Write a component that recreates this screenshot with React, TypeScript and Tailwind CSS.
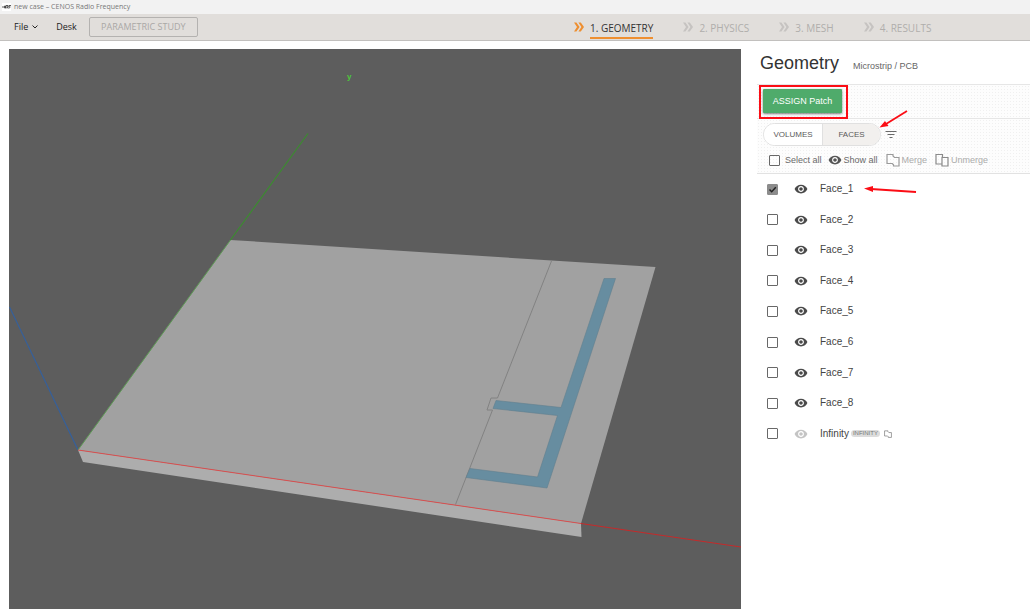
import { useState } from "react";
import type { ReactNode } from "react";

const STEPS = ["1. GEOMETRY", "2. PHYSICS", "3. MESH", "4. RESULTS"];

const FACES = ["Face_1", "Face_2", "Face_3", "Face_4", "Face_5", "Face_6", "Face_7", "Face_8"];

// Dotted texture behind the two toolbars of the side panel.
const TEXTURE = "bg-[#fdfdfd] bg-[radial-gradient(#f0f0f0_1px,transparent_1px)] bg-[size:3px_3px]";

function EyeIcon({ className }: { className: string }) {
  return (
    <svg className={className} viewBox="0 0 24 24" fill="currentColor" aria-hidden="true">
      <path d="M12 4.5C7 4.5 2.73 7.61 1 12c1.73 4.39 6 7.5 11 7.5s9.27-3.11 11-7.5c-1.73-4.39-6-7.5-11-7.5zM12 17c-2.76 0-5-2.24-5-5s2.24-5 5-5 5 2.24 5 5-2.24 5-5 5zm0-8c-1.66 0-3 1.34-3 3s1.34 3 3 3 3-1.34 3-3-1.34-3-3-3z" />
    </svg>
  );
}

function MergeIcon({ className }: { className: string }) {
  return (
    <svg className={className} viewBox="0 0 14 14" fill="none" stroke="currentColor" aria-hidden="true">
      <path d="M1 1.500h6v1.500l1.500 1.500H13V13H7.500v-1.200L6.300 10.500H1z" strokeWidth="1.200" />
    </svg>
  );
}

function UnmergeIcon({ className }: { className: string }) {
  return (
    <svg className={className} viewBox="0 0 14 14" fill="none" stroke="currentColor" aria-hidden="true">
      <path d="M7 11H1V1.500h6.500v3M7 4.500h6V13H7z" strokeWidth="1.200" />
    </svg>
  );
}

function ChevronsIcon({ className }: { className: string }) {
  return (
    <svg className={className} viewBox="0 0 10 10" fill="currentColor" aria-hidden="true">
      <path d="M0 .5h2.400L5.600 5 2.400 9.500H0L3 5zM4.400 .5h2.400L10 5 6.800 9.500H4.400L7.400 5z" />
    </svg>
  );
}

function Checkbox({ label, checked, onChange }: { label: string; checked: boolean; onChange: () => void }) {
  return (
    <span className="relative flex size-[11px] shrink-0">
      <input
        type="checkbox"
        aria-label={label}
        checked={checked}
        onChange={onChange}
        className="size-[11px] appearance-none rounded-[1px] border border-[#686868] checked:border-[#8c8c8c] checked:bg-[#8c8c8c]"
      />
      {checked && (
        <svg className="pointer-events-none absolute inset-0 size-[11px]" viewBox="0 0 11 11" fill="none" stroke="#222" strokeWidth="1.5">
          <path d="M2.500 5.500l2.200 2.200L8.800 3.300" />
        </svg>
      )}
    </span>
  );
}

function FaceRow({
  name,
  checked,
  onToggle,
  dim,
  children,
}: {
  name: string;
  checked: boolean;
  onToggle: () => void;
  dim?: boolean;
  children?: ReactNode;
}) {
  return (
    <li className="flex items-center pl-2.5">
      <Checkbox label={name} checked={checked} onChange={onToggle} />
      <button type="button" aria-label={`Toggle ${name}`} className={dim ? "ml-4 text-[#c4c4c4]" : "ml-4 text-[#4a4a4a]"}>
        <EyeIcon className="size-[14px]" />
      </button>
      <span className="ml-3 text-[10px] leading-3 text-[#444]">{name}</span>
      {children}
    </li>
  );
}

function Viewport() {
  return (
    <svg
      className="min-w-0 flex-1 self-stretch bg-[#5d5d5d]"
      viewBox="9 49 732 560"
      preserveAspectRatio="xMinYMin slice"
      role="img"
      aria-label="3D model"
    >
      {/* Board */}
      <path d="M78 450L581 523.500L581.500 537L83 462z" fill="#adadad" />
      <path d="M230.500 240L655.500 267L581 523.500L78 450z" fill="#a1a1a1" />

      {/* Face edges */}
      <path d="M551.500 261L497.500 398H491L487 410H492.500L455.500 504.500" fill="none" stroke="#828282" strokeWidth="1" />
      <path
        d="M604 278.500H615.500L547 488L466 477.500L470 468.500L537.500 477L557.500 415.500L493 408.500L496 400.500L561 407.500z"
        fill="#678da0"
        stroke="#62808e"
        strokeWidth="0.6"
      />

      {/* Axes */}
      <path d="M78 450L9.500 307" stroke="#35609c" strokeWidth="1.200" />
      <path d="M78 450L230.500 240" stroke="#5e9a55" strokeWidth="1" />
      <path d="M230.500 240L308 133.500" stroke="#3b8c2f" strokeWidth="1.200" />
      <path d="M78 450L581 523.500" stroke="#d94f4f" strokeWidth="1" />
      <path d="M581 523.500L741 547" stroke="#c42b2b" strokeWidth="1.200" />
      <text x="347" y="79" fill="#4cc83c" fontSize="8" fontWeight="700" fontFamily="Liberation Sans, sans-serif">
        y
      </text>
    </svg>
  );
}

export default function App() {
  const [selected, setSelected] = useState<string[]>(["Face_1"]);
  const [mode, setMode] = useState("FACES");
  const all = [...FACES, "Infinity"];

  function toggle(name: string) {
    setSelected((prev) => (prev.includes(name) ? prev.filter((n) => n !== name) : [...prev, name]));
  }

  return (
    <div className="flex h-screen flex-col overflow-hidden bg-white font-['Liberation_Sans',Arial,sans-serif]">
      {/* Title bar */}
      <header className="flex h-[14px] shrink-0 items-center gap-[3px] bg-[#f2f2f2] pl-0.5 font-['Open_Sans',sans-serif]">
        <svg className="h-2 w-[9px]" viewBox="0 0 9 8" aria-hidden="true">
          <path d="M0 0h9v8H0z" fill="#fff" />
          <path d="M0 4h2M2.500 3h1v2h-1zM4 5.500v-3h2v1.500h-1l1 1.500M7 5.500v-3h2M7 4h1.500" fill="none" stroke="#333" strokeWidth=".8" />
        </svg>
        <span className="text-[7px] leading-[14px] text-[#777]">new case – CENOS Radio Frequency</span>
      </header>

      {/* Main menu and workflow steps */}
      <nav className="flex h-[27px] shrink-0 items-center border-b border-[#c2c0be] bg-[#e1dedb] font-['Open_Sans',sans-serif]">
        <div className="flex w-[574px] shrink-0 items-center pl-3.5">
          <button type="button" className="flex items-center gap-1 text-[9px] leading-3 text-[#222]">
            File
            <svg className="h-1.5 w-1.5" viewBox="0 0 6 6" fill="none" stroke="currentColor" aria-hidden="true">
              <path d="M.5 1.500L3 4l2.500-2.500" />
            </svg>
          </button>
          <button type="button" className="ml-[18px] text-[9px] leading-3 text-[#222]">
            Desk
          </button>
          <button
            type="button"
            className="ml-3 h-5 w-[109px] rounded-[2px] border border-[#b4b2b0] text-[9px] leading-3 text-[#aaa8a6]"
          >
            PARAMETRIC STUDY
          </button>
        </div>
        <ol className="flex h-full items-stretch gap-[30px] pb-px">
          {STEPS.map((step, i) => (
            <li key={step} className="flex items-center gap-1.5">
              <ChevronsIcon className={i === 0 ? "size-2.5 text-[#ee8f31]" : "size-2.5 text-[#c6c3c1]"} />
              <button
                type="button"
                className={[
                  "h-full border-b-2 pt-1 text-[10px] leading-3",
                  i === 0 ? "border-[#ee8f31] text-[#333]" : "border-transparent text-[#b0aeac]",
                ].join(" ")}
              >
                {step}
              </button>
            </li>
          ))}
        </ol>
      </nav>

      <main className="flex min-h-0 flex-1 pl-[9px] pt-2">
        <Viewport />

        {/* Side panel */}
        <aside className="-mt-2 w-[289px] shrink-0 pl-4">
          <div className="flex h-[43px] items-baseline gap-3.5 pl-[3px] pt-2.5">
            <h1 className="text-[18px] leading-6 text-[#333]">Geometry</h1>
            <p className="text-[9px] leading-3 text-[#666]">Microstrip / PCB</p>
          </div>

          <div className={`flex h-[35px] items-start border-y border-[#e6e6e6] pl-0.5 ${TEXTURE}`}>
            <div className="border-2 border-[#fb0d15] pb-1 pl-0.5 pr-1 pt-0.5">
              <button
                type="button"
                className="block h-6 w-[79px] rounded-[1px] bg-[#4fab6b] text-[9px] leading-3 text-white shadow-sm shadow-black/40"
              >
                ASSIGN Patch
              </button>
            </div>
          </div>

          <div className={`relative h-[55px] border-b border-[#e2e2e2] pl-1.5 pt-1 ${TEXTURE}`}>
            <div className="flex items-center">
              <div className="flex h-[23px] overflow-hidden rounded-full border border-[#e0e0e0] bg-white">
                {["VOLUMES", "FACES"].map((m) => (
                  <button
                    key={m}
                    type="button"
                    onClick={() => setMode(m)}
                    className={[
                      "w-[58px] text-[8px] leading-3 text-[#5a5a5a]",
                      mode === m ? "border-l border-[#e0e0e0] bg-[#f2f0ee]" : "bg-white",
                    ].join(" ")}
                  >
                    {m}
                  </button>
                ))}
              </div>
              <button type="button" aria-label="Filter" className="ml-1 text-[#6a6a6a]">
                <svg className="h-2.5 w-3" viewBox="0 0 12 10" fill="none" stroke="currentColor" aria-hidden="true">
                  <path d="M.5 1.500h11M2.500 4.500h7M4.500 7.500h3" strokeWidth="1.200" />
                </svg>
              </button>
            </div>
            <div className="mt-1.5 flex h-4 items-center pl-1.5 text-[9px] leading-3 text-[#6a6a6a]">
              <Checkbox
                label="Select all"
                checked={selected.length === all.length}
                onChange={() => setSelected(selected.length === all.length ? [] : all)}
              />
              <span className="ml-[5px]">Select all</span>
              <button type="button" className="ml-1.5 flex items-center gap-0.5">
                <EyeIcon className="size-[14px] text-[#555]" />
                Show all
              </button>
              <button type="button" className="ml-2 flex items-center gap-0.5 text-[#ababab]">
                <MergeIcon className="size-[14px] text-[#9a9a9a]" />
                Merge
              </button>
              <button type="button" className="ml-2 flex items-center gap-0.5 text-[#ababab]">
                <UnmergeIcon className="size-[14px] text-[#8a8a8a]" />
                Unmerge
              </button>
            </div>
            {/* Callout arrow to the FACES tab */}
            <svg className="absolute -top-3 left-[121px] h-[22px] w-8" viewBox="878 106 32 22" aria-hidden="true">
              <path d="M907 110L886 123" stroke="#fb0d15" strokeWidth="1.800" />
              <path d="M879.500 126.500L885 120L888.500 125z" fill="#fb0d15" />
            </svg>
          </div>

          <ul className="grid h-[275px] auto-rows-fr">
            {FACES.map((name) => (
              <FaceRow key={name} name={name} checked={selected.includes(name)} onToggle={() => toggle(name)}>
                {name === "Face_1" && (
                  <svg className="ml-[11px] h-2.5 w-[54px]" viewBox="0 0 54 10" aria-hidden="true">
                    <path d="M7 5L52 8" stroke="#fb0d15" strokeWidth="1.800" />
                    <path d="M0 4.500L9 2V8z" fill="#fb0d15" />
                  </svg>
                )}
              </FaceRow>
            ))}
            <FaceRow name="Infinity" checked={selected.includes("Infinity")} onToggle={() => toggle("Infinity")} dim>
              <span className="ml-0.5 rounded-full bg-[#dcdcdc] px-0.5 text-[6px] leading-[7px] text-[#777]">INFINITY</span>
              <MergeIcon className="ml-1 size-2 text-[#777]" />
            </FaceRow>
          </ul>
        </aside>
      </main>
    </div>
  );
}
